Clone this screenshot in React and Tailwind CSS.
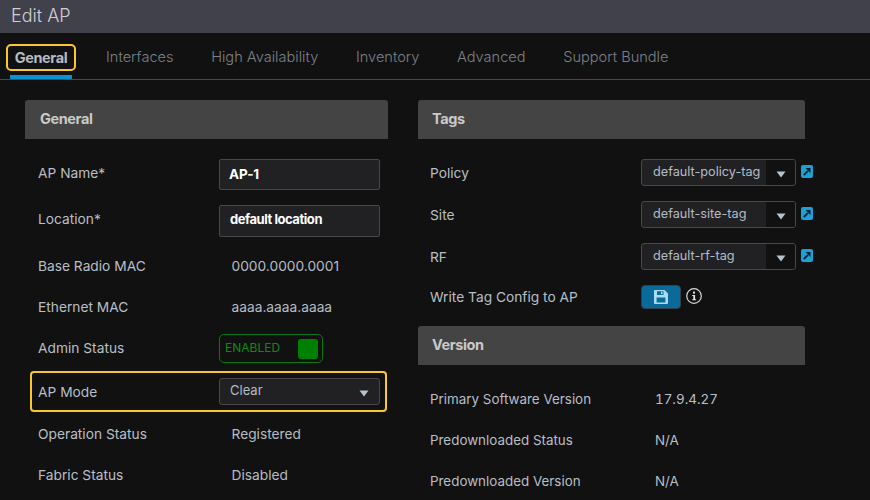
const Caret = () => (
  <svg width="10" height="7" viewBox="0 0 10 7" className="block">
    <path d="M0.5 0.5h9L5 6.5z" fill="#b9c3cc" />
  </svg>
);

const Arrow = () => (
  <svg width="12" height="13" viewBox="0 0 12 13" className="block shrink-0">
    <rect width="12" height="13" rx="2" fill="#1ba0d7" />
    <path d="M2.8 10 7 5.8" stroke="#0b1d26" strokeWidth="1.8" />
    <path d="M4.6 3h4.9v4.9z" fill="#0b1d26" />
  </svg>
);

// floppy icon on the write button
const SaveIcon = () => (
  <svg width="14" height="14" viewBox="0 0 14 14" className="block">
    <path fillRule="evenodd" fill="#a9dcf2" d="M1 0h9.5L14 3.5V13a1 1 0 0 1-1 1H1a1 1 0 0 1-1-1V1a1 1 0 0 1 1-1zM3 1.3v3.6h6.5V1.3zM2.6 7.6v5h8.8v-5z" />
    <rect x="7" y="1.8" width="1.5" height="2.4" fill="#a9dcf2" />
  </svg>
);

const InfoIcon = () => (
  <svg width="16" height="16" viewBox="0 0 16 16" className="block">
    <circle cx="8" cy="8" r="7.3" fill="none" stroke="#d8d8d8" strokeWidth="1.2" />
    <rect x="7" y="3.6" width="2" height="2" fill="#e4e4e4" />
    <path d="M6.2 7h2.9v4.2h1v1.1H6.2v-1.1h1.1V8.1H6.2z" fill="#e4e4e4" />
  </svg>
);

const SectionHead = ({ title, cls = 'pl-[15px]' }) => (
  <div className={`h-[39px] bg-[#444444] rounded-t-[3px] flex items-center pb-[2px] text-[14.5px] font-bold text-[#c9c9c9] tracking-[-0.4px] ${cls}`}>
    {title}
  </div>
);

const Row = ({ label, value, cls }) => (
  <div className={`flex items-center pl-[13px] text-[13.75px] text-[#b8bfc6] ${cls}`}>
    <span className="w-[193.5px] shrink-0">{label}</span>
    <span className="text-[#b4bcc4]">{value}</span>
  </div>
);

const VersionRow = ({ label, value, cls }) => (
  <div className={`flex items-center pl-[12px] h-[20px] text-[13.4px] text-[#b8bfc6] ${cls}`}>
    <span className="w-[225px] shrink-0">{label}</span>
    <span className="tabular-nums">{value}</span>
  </div>
);

const TagSelect = ({ label, value, cls }) => (
  <div className={`flex items-center pl-[12px] ${cls}`}>
    <span className="w-[211px] shrink-0 mt-[2px] text-[13.75px] text-[#b8bfc6]">{label}</span>
    <div className="w-[155px] shrink-0 h-[27px] flex border border-[#48484c] rounded-[3px] bg-[#212124] overflow-hidden">
      <span className="flex-1 pl-[11px] pt-[2px] text-[12.7px] text-[#b4bcc4] whitespace-nowrap">{value}</span>
      <span className="w-[29px] bg-[#111111] flex items-center justify-center pt-[4px]"><Caret /></span>
    </div>
    <span className="ml-[5px] -mt-[3px] shrink-0"><Arrow /></span>
  </div>
);

const App = () => {
  const tabs = ['Interfaces', 'High Availability', 'Inventory', 'Advanced', 'Support Bundle'];
  return (
    <div className="w-[870px] h-[500px] overflow-hidden bg-[#111111] font-['Inter',sans-serif]">
      <div className="h-[33px] bg-[#41414b] flex items-center pl-[11px] pb-[2px] text-[18px] font-light text-[#d0d0d4]">
        Edit AP
      </div>

      {/* tabs */}
      <div className="h-[47px] border-b border-[#4a4a4a] flex pl-[10px] text-[14.6px] text-[#7c8188]">
        <div className="relative w-[62px] h-[46px] border-b-[4px] border-[#0c93cf] mr-[34px] flex justify-center pt-[14px] rounded-b-[1px]">
          <span className="font-bold text-[14.5px] text-[#b5bbc1] tracking-[-0.4px]">General</span>
          <span className="absolute left-[-4px] top-[11px] w-[70px] h-[27px] border-2 border-[#fcc72e] rounded-[5px]" />
        </div>
        {tabs.map((t) => (
          <span key={t} className="pt-[14px] mr-[37.6px] font-light">{t}</span>
        ))}
      </div>

      <div className="flex pl-[25px] pt-[20px]">
        {/* left column */}
        <div className="w-[363px] mr-[30px]">
          <SectionHead title="General" />
          <div className="flex items-center pl-[13px] mt-[20px] h-[31px] text-[13.75px] text-[#b8bfc6]">
            <span className="w-[181px] shrink-0 -mt-[2px]">AP Name*</span>
            <div className="w-[161px] h-[31px] bg-[#212124] border border-[#48484c] rounded-[2px] flex items-center pl-[9px] text-[13.5px] font-bold text-white tracking-[-0.2px]">AP-1</div>
          </div>
          <div className="flex items-center pl-[13px] mt-[15px] h-[32px] text-[13.75px] text-[#b8bfc6]">
            <span className="w-[181px] shrink-0 -mt-[3px]">Location*</span>
            <div className="w-[161px] h-[32px] bg-[#212124] border border-[#48484c] rounded-[2px] flex items-center pl-[10px] pb-[2px] text-[13px] font-bold text-white tracking-[-0.45px]">default location</div>
          </div>
          <Row label="Base Radio MAC" value="0000.0000.0001" cls="h-[20px] mt-[19px]" />
          <Row label="Ethernet MAC" value="aaaa.aaaa.aaaa" cls="h-[20px] mt-[21px]" />
          <div className="flex items-center pl-[13px] mt-[17px] text-[13.75px] text-[#b8bfc6]">
            <span className="w-[181px] shrink-0 -mt-[1px]">Admin Status</span>
            <div className="w-[104px] h-[29px] border border-[#0b7a0b] rounded-[5px] flex items-center justify-between pl-[5px] pr-[4px]">
              <span className="text-[12px] text-[#0f8a0f] -mt-[2px]">ENABLED</span>
              <span className="w-[20px] h-[20px] bg-[#008000] rounded-[3px]" />
            </div>
          </div>
          <div className="ml-[5px] mt-[8px] w-[357px] h-[41px] border-2 border-[#fcc72e] rounded-[4px] flex items-center pl-[6px] text-[13.75px] text-[#b8bfc6]">
            <span className="w-[181px] shrink-0 mt-[2px]">AP Mode</span>
            <div className="w-[161px] h-[27px] bg-[#212124] border border-[#48484c] rounded-[3px] flex items-center justify-between pl-[10px] pr-[10px]">
              <span className="text-[13px] text-[#b4bcc4] -mt-[1px]">Clear</span>
              <span className="pt-[3px]"><Caret /></span>
            </div>
          </div>
          <Row label="Operation Status" value="Registered" cls="h-[20px] mt-[12px]" />
          <Row label="Fabric Status" value="Disabled" cls="h-[20px] mt-[21px]" />
        </div>

        {/* right column */}
        <div className="w-[387px] shrink-0">
          <SectionHead title="Tags" cls="pl-[14px]" />
          <TagSelect label="Policy" value="default-policy-tag" cls="mt-[20px]" />
          <TagSelect label="Site" value="default-site-tag" cls="mt-[15px]" />
          <TagSelect label="RF" value="default-rf-tag" cls="mt-[15px]" />
          <div className="flex items-center pl-[12px] mt-[15px]">
            <span className="w-[211px] shrink-0 text-[13.75px] text-[#b8bfc6]">Write Tag Config to AP</span>
            <div className="w-[40px] h-[24px] bg-[#0a6a99] rounded-[4px] border border-[#33424c] flex items-center justify-center">
              <SaveIcon />
            </div>
            <span className="ml-[5px] -mt-[3px]"><InfoIcon /></span>
          </div>
          <div className="mt-[17px]">
            <SectionHead title="Version" cls="pl-[14px]" />
          </div>
          <VersionRow label="Primary Software Version" value="17.9.4.27" cls="mt-[24px]" />
          <VersionRow label="Predownloaded Status" value="N/A" cls="mt-[21px]" />
          <VersionRow label="Predownloaded Version" value="N/A" cls="mt-[21px]" />
        </div>
      </div>
    </div>
  );
};

export default App;
